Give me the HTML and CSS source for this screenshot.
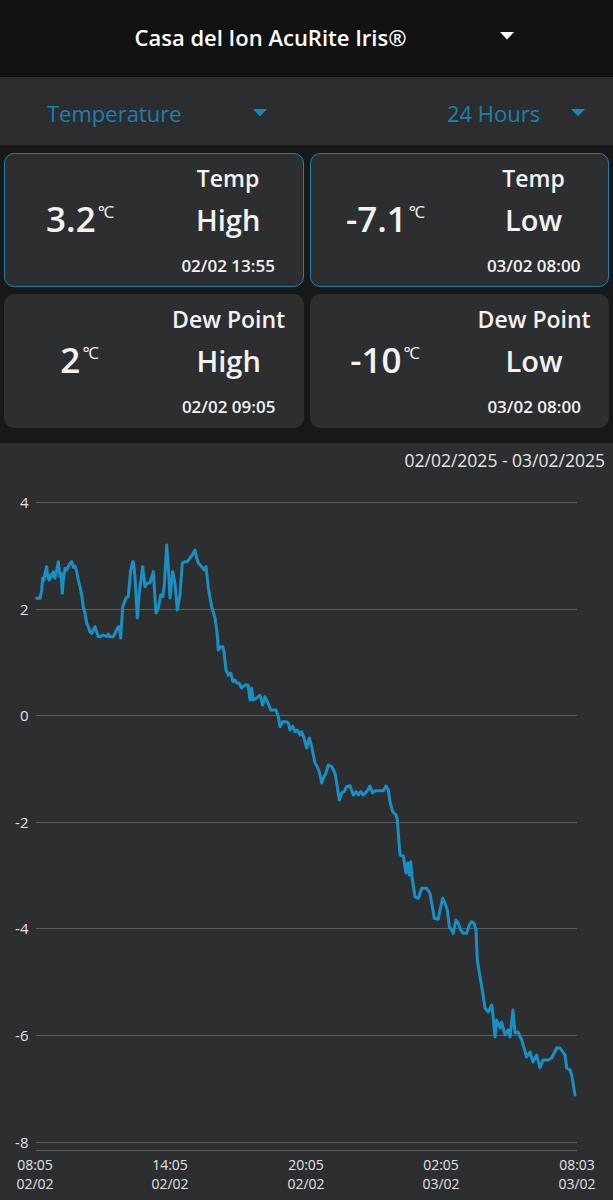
FILE: index.html
```html
<!DOCTYPE html>
<html lang="en">
<head>
<meta charset="utf-8">
<title>Casa del Ion AcuRite Iris</title>
<link rel="stylesheet" href="styles.css">
</head>
<body>
<header class="topbar">
  <div class="station">Casa del Ion AcuRite Iris®</div>
  <svg class="caret caret-white" width="14" height="8" viewBox="0 0 14 8"><path d="M0 0H14L7 7.5Z"/></svg>
</header>

<nav class="filters">
  <div class="select select-metric">
    <span class="select-label">Temperature</span>
    <svg class="caret caret-teal" width="14" height="8" viewBox="0 0 14 8"><path d="M0 0H14L7 7.5Z"/></svg>
  </div>
  <div class="select select-range">
    <span class="select-label">24 Hours</span>
    <svg class="caret caret-teal" width="14" height="8" viewBox="0 0 14 8"><path d="M0 0H14L7 7.5Z"/></svg>
  </div>
</nav>

<section class="cards">
  <div class="card card-active">
    <div class="card-value"><span class="num">3.2</span><span class="unit">°C</span></div>
    <div class="card-info">
      <div class="card-title">Temp</div>
      <div class="card-kind">High</div>
      <div class="card-time">02/02 13:55</div>
    </div>
  </div>
  <div class="card card-active">
    <div class="card-value"><span class="num">-7.1</span><span class="unit">°C</span></div>
    <div class="card-info">
      <div class="card-title">Temp</div>
      <div class="card-kind">Low</div>
      <div class="card-time">03/02 08:00</div>
    </div>
  </div>
  <div class="card">
    <div class="card-value"><span class="num">2</span><span class="unit">°C</span></div>
    <div class="card-info">
      <div class="card-title">Dew Point</div>
      <div class="card-kind">High</div>
      <div class="card-time">02/02 09:05</div>
    </div>
  </div>
  <div class="card">
    <div class="card-value"><span class="num">-10</span><span class="unit">°C</span></div>
    <div class="card-info">
      <div class="card-title">Dew Point</div>
      <div class="card-kind">Low</div>
      <div class="card-time">03/02 08:00</div>
    </div>
  </div>
</section>

<section class="chart">
  <div class="chart-range">02/02/2025 - 03/02/2025</div>
  <svg class="chart-svg" width="613" height="720" viewBox="0 480 613 720">
    <g class="grid">
      <line x1="36" x2="577" y1="502.5" y2="502.5"/>
      <line x1="36" x2="577" y1="609.5" y2="609.5"/>
      <line x1="36" x2="577" y1="715.5" y2="715.5"/>
      <line x1="36" x2="577" y1="822.5" y2="822.5"/>
      <line x1="36" x2="577" y1="928.5" y2="928.5"/>
      <line x1="36" x2="577" y1="1035.5" y2="1035.5"/>
      <line x1="36" x2="577" y1="1142.5" y2="1142.5"/>
      <line x1="36" x2="577" y1="1150.5" y2="1150.5"/>
    </g>
    <g class="ylabels">
      <text x="28.5" y="508">4</text>
      <text x="28.5" y="615">2</text>
      <text x="28.5" y="721">0</text>
      <text x="28.5" y="828">-2</text>
      <text x="28.5" y="934">-4</text>
      <text x="28.5" y="1041">-6</text>
      <text x="28.5" y="1148">-8</text>
    </g>
    <g class="xlabels">
      <text x="35" y="1170">08:05</text><text x="35" y="1189">02/02</text>
      <text x="170" y="1170">14:05</text><text x="170" y="1189">02/02</text>
      <text x="306" y="1170">20:05</text><text x="306" y="1189">02/02</text>
      <text x="441" y="1170">02:05</text><text x="441" y="1189">03/02</text>
      <text x="577" y="1170">08:03</text><text x="577" y="1189">03/02</text>
    </g>
    <polyline class="series" points="36.7,598.3 40,598.3 41.7,590 42.7,578.3 44,580 45,573.3 46.7,566.7 47.7,576.7 49.3,580 50.7,575 51.7,576.7 53.3,571.7 55,578.3 56.7,570 58.3,561.7 60,576.7 61,573.3 62.3,593.3 63.3,580 65,568.3 66.7,570 68.3,566.7 70,563.3 71.7,561.7 73.3,567.3 75,566 76.7,571.7 78.3,580 80,586.7 81.7,595 83.3,606.7 85,613.3 86.7,623.3 88.3,626.7 90,631.7 91.7,633.3 93.3,630 95,626.7 96.7,631.7 98.3,636.7 100,636.7 103.3,635 106.7,636.7 108.3,634 110,636.7 113.3,636.7 115,633.3 116.7,630 118.3,626.7 119.3,626.7 120.7,638 122.7,606.7 126,598 128.3,596.7 130.7,570 132.7,561.7 133.3,561.7 135,576.7 137.3,618 139.3,593 142.7,566.7 145,586.7 147.3,583 150,583 153.3,571.7 156,613 158.3,608 160.7,595 162.7,596.7 164.3,585 166.7,545 168.3,566.7 170,598 172.7,571.7 175,583 177.3,610 180,595 182.3,563 185,561.7 187.3,561.7 190,558 192.3,555 195,550 196.7,558 198.3,563 201.7,566.7 204,570 206,566.7 208.3,588 211.7,606.7 215,618 216.7,630 217.7,640 218.3,650 220.7,646.7 222.7,646.7 224,651.7 226,670 228.3,675 230.7,673 233,681.7 235,680 236.7,683 239,683 241.7,688 245,685 248,685 250,700 251.7,688 253,700 256.7,698 260,695 262.7,705 265,696.7 268,703 270.7,710 276,710 278.3,716.7 280,726.7 282.7,721.7 286,721.7 288.3,723 290,730 292.7,726 295,731.7 297.3,730 300,735 301.7,731.7 304,738 306.7,748 309.3,738 311.7,746.7 315,763 317.3,766.7 319.3,771.7 321.7,783 324,776.7 326,773 328.3,765 331.7,766.7 335,773 336.7,783 339.3,800 341.7,793 344,791.7 346.7,786.7 350,785.7 353.3,795 356,791.7 358.3,795 360.7,791.7 363.3,795 366.7,791.7 370,786 372.7,793 375,790.7 380,790.7 383.3,790.7 386,786 388.3,790 390,801.7 392.7,811.7 396,815 397.3,820 398.3,833 400,855 403.3,856 406,873 407.7,863 409.3,875 410.7,861.7 412,876.7 415,896.7 418.3,898.3 421.7,888.3 426.7,888.3 430,893.3 431.7,903.3 434.3,918.3 438.3,919.3 440,910 442.7,898.3 445,903.3 447.3,910 449.3,926.7 451.7,930 453.3,933.3 456,920 458.3,923.3 460.7,930 463.3,933.3 466.7,933.3 469.3,925 471.7,921.7 474,923.3 476,930 477.3,960 480,976.7 482.3,990 485,1008 488.3,1012 491.7,1005 493,1015 495,1037 496.7,1020 500,1028 501.7,1022 505,1035 508,1030 510,1037 513,1010 515,1033 518,1032 521.7,1040 526.7,1057 530,1052 533,1062 536.7,1055 540,1068 543,1060 548,1060 551.7,1058 556.7,1048 560,1048 565,1055 566.7,1068 570,1070 571.7,1075 575,1095"/>
  </svg>
</section>
</body>
</html>
```

FILE: styles.css
```css
* { box-sizing: border-box; }

html, body {
  margin: 0;
  padding: 0;
  background: #181818;
  font-family: "Open Sans", "Noto Sans", sans-serif;
  color: #f2f2f2;
  width: 613px;
  height: 1200px;
  overflow: hidden;
}

.topbar {
  height: 77px;
  background: #121212;
  display: flex;
  align-items: center;
  padding: 0 99px 3px 41px;
}

.station {
  flex: 1;
  text-align: center;
  font-size: 22px;
  font-weight: 600;
  color: #ffffff;
  line-height: 28px;
}

.caret { display: block; flex: none; }
.caret-white { fill: #ffffff; margin-top: -3px; }
.caret-teal { fill: #1b86b4; }

.filters {
  height: 68px;
  background: #2c2d2f;
  display: flex;
  justify-content: space-between;
  align-items: center;
  padding: 3px 28px 0 47px;
}

.select {
  display: flex;
  align-items: center;
  color: #1b80ad;
  font-size: 22px;
  line-height: 30px;
}

.select-metric .select-label { width: 206px; }
.select-range .select-label { width: 124px; }

.cards {
  display: grid;
  grid-template-columns: 1fr 1fr;
  column-gap: 6px;
  row-gap: 7px;
  padding: 8px 4px 15px;
  background: #181818;
}

.card {
  height: 134px;
  background: #2d2e30;
  border-radius: 10px;
  display: grid;
  grid-template-columns: 1fr 1fr;
}

.card-active {
  border: 1px solid #1f7fa7;
}

.card-value {
  display: flex;
  justify-content: center;
  align-items: flex-start;
  align-self: center;
  margin-top: -2px;
}

.num {
  font-size: 35px;
  line-height: 36px;
  font-weight: 600;
}

.unit {
  font-size: 17px;
  line-height: 16px;
  margin-top: 3px;
  margin-left: 2px;
  letter-spacing: -1.5px;
}

.card-info {
  display: flex;
  flex-direction: column;
  align-items: center;
  padding-top: 9px;
}

.card-active .card-info { padding-top: 8px; }

.card-title {
  font-size: 23px;
  line-height: 32px;
  font-weight: 600;
}

.card-kind {
  margin-top: 6px;
  font-size: 29px;
  line-height: 40px;
  font-weight: 600;
}

.card-time {
  margin-top: 14px;
  font-size: 17px;
  line-height: 24px;
  font-weight: 600;
}

.chart {
  background: #2d2e30;
}

.chart-range {
  height: 37px;
  padding: 7px 8px 0 0;
  text-align: right;
  font-size: 17.5px;
  line-height: 20px;
  color: #e6e6e6;
}

.chart-svg { display: block; }

.grid line {
  stroke: #5c5d5f;
  stroke-width: 1;
}

.ylabels text {
  fill: #e2e2e2;
  font-size: 15px;
  text-anchor: end;
}

.xlabels text {
  fill: #e2e2e2;
  font-size: 14px;
  text-anchor: middle;
}

.series {
  fill: none;
  stroke: #1a8fc4;
  stroke-width: 3;
  stroke-linejoin: round;
  stroke-linecap: round;
}
```
